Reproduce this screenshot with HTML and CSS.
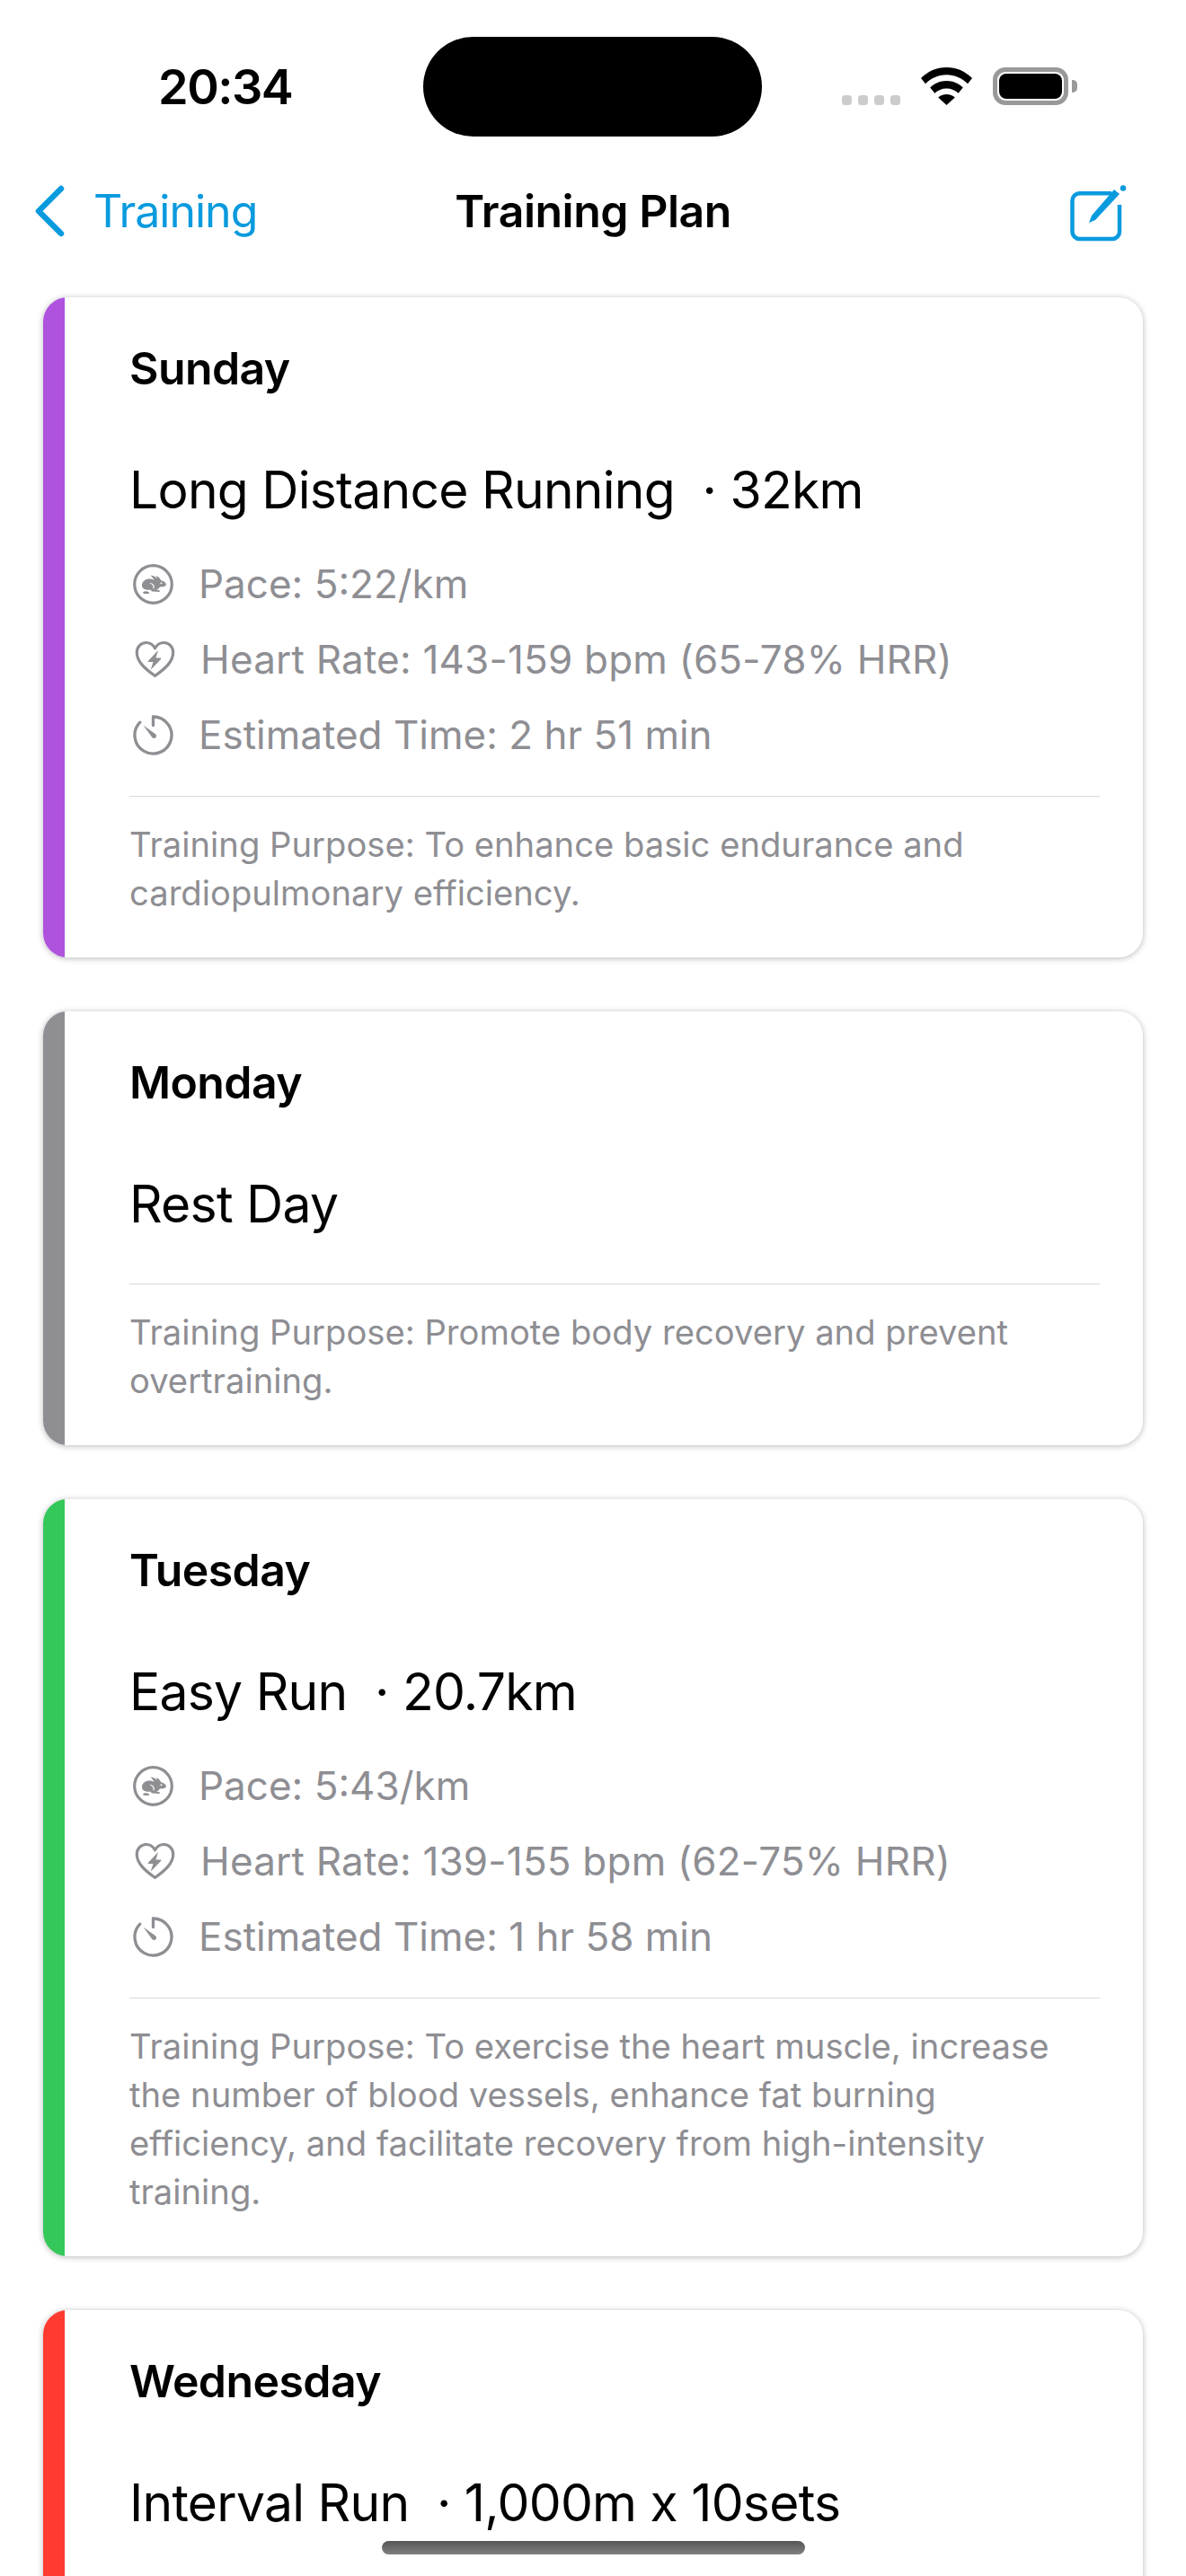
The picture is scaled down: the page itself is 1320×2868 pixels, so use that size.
FILE: index.html
```html
<!DOCTYPE html>
<html lang="en">
<head>
<meta charset="utf-8">
<title>Training Plan</title>
<link rel="stylesheet" href="styles.css">
</head>
<body>
<div class="screen">
  <svg width="0" height="0" class="defs">
    <defs>
      <symbol id="hare" viewBox="0 0 45 45">
        <circle cx="22.5" cy="22.5" r="20.8" fill="none" stroke="currentColor" stroke-width="3.2"/>
        <path fill="currentColor" d="M10 23C10.500 19 14 16.500 18.500 16.500 20.500 16.500 22 17 23.500 18 22.500 15.500 21 14 19.500 12.500 22.500 12.800 25 14 27 16 26.700 15 26.200 14 25.500 13 28 13.600 30 15.300 31 18 33.500 18.700 36 20 37 22.500 37 24 35.500 25 33.500 25.200L30 25.500C29 27 27.500 28 26 28.500L29 29C30.300 29.500 30 31 29 31L22 30.600C20.800 30.500 20 29.500 19.800 28.700 17.500 29 15 28.800 13 28 11 27.200 9.800 25.500 10 23Z"/>
        <path fill="currentColor" d="M11.500 31C13 30 15.500 30 17.500 31 18.500 31.700 18 33 17 33H13C11.500 33 10.500 31.800 11.500 31Z"/>
        <path fill="none" stroke="#fff" stroke-width="1.200" stroke-linecap="round" d="M19.500 21.500c2.800.3 4.200 2.700 3.500 5.500"/>
        <circle cx="31.500" cy="21.200" r="1" fill="#fff"/>
      </symbol>
      <symbol id="bolt-heart" viewBox="0 0 45 42">
        <path fill="none" stroke="currentColor" stroke-width="3.200" stroke-linejoin="round" d="M22.500 39.500C12 32 2.300 24 2.300 13.500 2.300 7 7 2.500 12.500 2.500c4.300 0 7.800 2.300 10 6.300 2.200-4 5.700-6.300 10-6.300 5.500 0 10.200 4.500 10.200 11 0 10.500-9.700 18.500-20.200 26z"/>
        <path fill="currentColor" d="M26 11 15 22.800c-.6.700-.3 1.300.5 1.300h5l-2.800 8.600L29 20.900c.6-.7.300-1.300-.5-1.300h-5z"/>
      </symbol>
      <symbol id="timer" viewBox="0 0 45 45">
        <path fill="none" stroke="currentColor" stroke-width="3.300" stroke-linecap="round" d="M22.500 2A20.500 20.500 0 1 1 7.800 8.200"/>
        <path fill="none" stroke="currentColor" stroke-width="3.300" stroke-linecap="round" d="M22.500 2v9.500"/>
        <path fill="currentColor" d="M11.500 11.500 25 21.200c1.300 1 1.500 2.900.4 4-1.200 1.200-3.100 1.100-4.100-.3z"/>
      </symbol>
    </defs>
  </svg>

  <header class="status-bar">
    <span class="clock">20:34</span>
    <div class="island"></div>
    <div class="status-icons">
      <div class="signal-dots"><i></i><i></i><i></i><i></i></div>
      <svg class="wifi" viewBox="0 0 57 42" width="57" height="42">
        <path d="M28.500 0C17.500 0 7.800 4.300 0 12l5 6.200C11.300 12 19.500 8.300 28.500 8.300S45.700 12 52 18.200L57 12C49.200 4.300 39.500 0 28.500 0z"/>
        <path d="M28.500 15c-7 0-13.200 2.700-18.300 7.400l5.200 6.300c3.500-3.200 8-5.200 13.100-5.200s9.600 2 13.100 5.200l5.200-6.300C41.700 17.700 35.500 15 28.500 15z"/>
        <path d="M28.500 30c-3.700 0-7 1.300-9.300 3.400L28.500 42l9.300-8.600C35.500 31.300 32.200 30 28.500 30z"/>
      </svg>
      <div class="battery"><div class="battery-level"></div><div class="battery-cap"></div></div>
    </div>
  </header>

  <nav class="nav-bar">
    <a class="back">
      <svg class="chevron" viewBox="0 0 34 58" width="34" height="58">
        <path d="M30 4 5 29l25 25" fill="none" stroke="currentColor" stroke-width="6.500" stroke-linecap="round" stroke-linejoin="round"/>
      </svg>
      <span>Training</span>
    </a>
    <h1 class="nav-title">Training Plan</h1>
    <svg class="compose" viewBox="0 0 64 64" width="64" height="64">
      <path d="M47 9.200H11.500a8 8 0 0 0-8 8V52a8 8 0 0 0 8 8H48a8 8 0 0 0 8-8V22" fill="none" stroke="currentColor" stroke-width="4.500"/>
      <path d="M22 42l3-8L50 5l6 5-27 29z" fill="currentColor"/>
      <circle cx="60" cy="3.500" r="3.200" fill="currentColor"/>
    </svg>
  </nav>

  <main class="plan">
    <article class="card">
      <div class="card-bar bar-purple"></div>
      <div class="card-body">
        <h2 class="day">Sunday</h2>
        <p class="workout">Long Distance Running&nbsp; · 32km</p>
        <ul class="metrics">
          <li><svg class="m-icon"><use href="#hare"/></svg><span>Pace: 5:22/km</span></li>
          <li class="hr"><svg class="m-icon heart"><use href="#bolt-heart"/></svg><span>Heart Rate: 143-159 bpm (65-78% HRR)</span></li>
          <li><svg class="m-icon"><use href="#timer"/></svg><span>Estimated Time: 2 hr 51 min</span></li>
        </ul>
        <p class="purpose">Training Purpose: To enhance basic endurance and cardiopulmonary efficiency.</p>
      </div>
    </article>

    <article class="card">
      <div class="card-bar bar-gray"></div>
      <div class="card-body">
        <h2 class="day">Monday</h2>
        <p class="workout">Rest Day</p>
        <p class="purpose">Training Purpose: Promote body recovery and prevent overtraining.</p>
      </div>
    </article>

    <article class="card">
      <div class="card-bar bar-green"></div>
      <div class="card-body">
        <h2 class="day">Tuesday</h2>
        <p class="workout">Easy Run&nbsp; · 20.7km</p>
        <ul class="metrics">
          <li><svg class="m-icon"><use href="#hare"/></svg><span>Pace: 5:43/km</span></li>
          <li class="hr"><svg class="m-icon heart"><use href="#bolt-heart"/></svg><span>Heart Rate: 139-155 bpm (62-75% HRR)</span></li>
          <li><svg class="m-icon"><use href="#timer"/></svg><span>Estimated Time: 1 hr 58 min</span></li>
        </ul>
        <p class="purpose">Training Purpose: To exercise the heart muscle, increase the number of blood vessels, enhance fat burning efficiency, and facilitate recovery from high-intensity training.</p>
      </div>
    </article>

    <article class="card card-open">
      <div class="card-bar bar-red"></div>
      <div class="card-body">
        <h2 class="day">Wednesday</h2>
        <p class="workout">Interval Run&nbsp; · 1,000m x 10sets</p>
      </div>
    </article>
  </main>

  <div class="home-indicator"></div>
</div>
</body>
</html>
```
FILE: styles.css
```css
* { box-sizing: border-box; }

html, body {
  margin: 0;
  padding: 0;
  background: #fff;
}

.screen {
  position: relative;
  width: 1320px;
  height: 2868px;
  overflow: hidden;
  background: #fff;
  font-family: Inter, "Liberation Sans", sans-serif;
  color: #000;
}

.defs { position: absolute; }

/* Status bar */
.status-bar {
  display: flex;
  align-items: flex-start;
  height: 180px;
  padding: 41px 0 0 176px;
}

.clock {
  width: 295px;
  margin-top: 29px;
  font-size: 54px;
  line-height: 54px;
  font-weight: 600;
  letter-spacing: -1.5px;
}

.island {
  width: 377px;
  height: 111px;
  border-radius: 56px;
  background: #000;
}

.status-icons {
  display: flex;
  align-items: flex-end;
  margin: 34px 0 0 89px;
}

.signal-dots {
  display: flex;
  gap: 7px;
  margin-right: 23px;
}

.signal-dots i {
  width: 11px;
  height: 11px;
  border-radius: 3.5px;
  background: #ccc;
}

.wifi { fill: #000; margin-right: 23px; }

.battery {
  position: relative;
  width: 84px;
  height: 42px;
  border: 5px solid #999;
  border-radius: 14px;
}

.battery-level {
  position: absolute;
  inset: 2px;
  border-radius: 8px;
  background: #000;
}

.battery-cap {
  position: absolute;
  right: -15px;
  top: 9px;
  width: 6px;
  height: 14px;
  border-radius: 0 5px 5px 0;
  background: #999;
}

/* Navigation bar */
.nav-bar {
  position: relative;
  display: flex;
  align-items: center;
  justify-content: space-between;
  height: 110px;
  padding: 0 66px 0 38px;
  color: #0a9ade;
}

.back {
  display: flex;
  align-items: center;
  gap: 32px;
  font-size: 50px;
  line-height: 60px;
  letter-spacing: -1px;
}

.chevron { flex: none; }

.nav-title {
  position: absolute;
  left: 0;
  right: 0;
  margin: 0;
  text-align: center;
  font-size: 50px;
  line-height: 60px;
  font-weight: 600;
  letter-spacing: -0.5px;
  color: #000;
}

.compose { flex: none; margin-top: 6px; }

/* Plan cards */
.plan {
  display: flex;
  flex-direction: column;
  gap: 60px;
  padding: 41px 48px 0;
}

.card {
  display: flex;
  flex: none;
  overflow: hidden;
  border-radius: 27px;
  background: #fff;
  box-shadow: 0 1px 7px rgba(0, 0, 0, 0.28);
}

.card-open { min-height: 420px; }

.card-bar { flex: none; width: 24px; }
.bar-purple { background: #af52de; }
.bar-gray { background: #8e8e93; }
.bar-green { background: #34c759; }
.bar-red { background: #ff3b30; }

.card-body {
  flex: 1;
  padding: 48px 48px 45px 72px;
}

.day {
  margin: 0 0 69px;
  font-size: 50px;
  line-height: 62px;
  font-weight: 600;
  letter-spacing: -0.6px;
}

.workout {
  margin: 0;
  padding-bottom: 26px;
  font-size: 57px;
  line-height: 72px;
  letter-spacing: -0.75px;
}

.metrics {
  margin: 0;
  padding: 0;
  list-style: none;
  color: #8e8e93;
  font-size: 44px;
}

.metrics li {
  display: flex;
  align-items: center;
  gap: 28px;
  height: 84px;
}

.m-icon {
  flex: none;
  width: 45px;
  height: 45px;
  margin-left: 4px;
}

.m-icon.heart { height: 42px; margin-left: 6px; }
.metrics li.hr { gap: 28px; letter-spacing: 0.2px; }

.purpose {
  margin: 26px 0 0;
  padding-top: 26px;
  border-top: 1px solid #d9d9db;
  color: #8e8e93;
  font-size: 38.2px;
  line-height: 54px;
}

/* Home indicator */
.home-indicator {
  position: absolute;
  left: 425px;
  top: 2829px;
  width: 471px;
  height: 15px;
  border-radius: 8px;
  background: linear-gradient(#555, #808080);
}
```
